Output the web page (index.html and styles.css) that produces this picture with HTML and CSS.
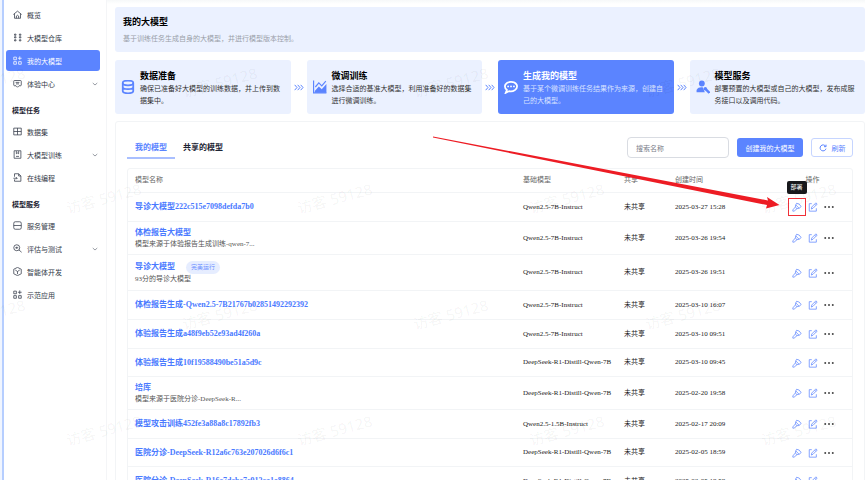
FILE: index.html
```html
<!DOCTYPE html>
<html lang="zh-CN">
<head>
<meta charset="utf-8">
<meta name="viewport" content="width=device-width, initial-scale=1">
<title>我的大模型</title>
<link rel="stylesheet" href="styles.css">
</head>
<body>
<svg class="sprite" aria-hidden="true">
  <symbol id="deploy" viewBox="0 0 24 24"><path d="M11 3q7 0 11 8l-5 4-8-8ZM9 7l-1 5 4 4 5-1M8 12l-6 7v3h3l7-6"/></symbol>
  <symbol id="edit" viewBox="0 0 24 24"><path d="M9 4H3v18h17v-7M8 17l1-5L19 2l3 3-10 10-4 2ZM16 5l3 3"/></symbol>
  <symbol id="more" viewBox="0 0 24 24"><path d="M1 12h4M10 12h4M19 12h4"/></symbol>
  <symbol id="chevron" viewBox="0 0 24 24"><path d="m3 8 9 8 9-8"/></symbol>
  <symbol id="arrows" viewBox="0 0 30 20"><path d="m2 2 7 8-7 8M11 2l7 8-7 8M20 2l7 8-7 8"/></symbol>
</svg>
<div class="app">
  <nav class="sidebar">
    <a class="item" href="#"><svg class="icon" viewBox="0 0 24 24"><path d="m1 12 11-9 11 9M4 10v12h16V10M9 22v-6q3-4 6 0v6"/></svg>概览</a>
    <a class="item" href="#"><svg class="icon" viewBox="0 0 24 24"><path d="M4 3h4v3H4ZM4 10h4v3H4ZM4 18h4v3H4ZM17 3h4v3h-4ZM17 10h4v3h-4ZM17 18h4v3h-4Z"/></svg>大模型仓库</a>
    <a class="item active" href="#"><svg class="icon" viewBox="0 0 24 24"><path d="M2 3h7v7H2ZM2 15h7v7H2ZM15 15h7v7h-7ZM18 1v10M13 6h10"/></svg>我的大模型</a>
    <a class="item" href="#"><svg class="icon" viewBox="0 0 24 24"><path d="M4 4h16q2 0 2 2v10q0 2-2 2h-4l-4 4-4-4H4q-2 0-2-2V6q0-2 2-2ZM7 9h10M8 13h8"/></svg>体验中心<svg class="chevron"><use href="#chevron"/></svg></a>
    <h2>模型任务</h2>
    <a class="item" href="#"><svg class="icon" viewBox="0 0 24 24"><path d="M2 3h20v18H2ZM12 3v18M2 12h20"/></svg>数据集</a>
    <a class="item" href="#"><svg class="icon" viewBox="0 0 24 24"><path d="M3 2h18v20H3ZM9 3v7l3-2 3 2V3M8 17h8"/></svg>大模型训练<svg class="chevron"><use href="#chevron"/></svg></a>
    <a class="item" href="#"><svg class="icon" viewBox="0 0 24 24"><path d="M4 10V2h11l6 6v14H4v-5M15 2v6h6M1 14h10M8 11l3 3-3 3"/></svg>在线编程</a>
    <h2>模型服务</h2>
    <a class="item" href="#"><svg class="icon" viewBox="0 0 24 24"><rect x="2" y="2" width="20" height="20" rx="4"/><path d="M2 12h20"/></svg>服务管理</a>
    <a class="item" href="#"><svg class="icon" viewBox="0 0 24 24"><circle cx="10" cy="10" r="8"/><path d="m16 16 7 6M6 10h8M10 7v6"/></svg>评估与测试<svg class="chevron"><use href="#chevron"/></svg></a>
    <a class="item" href="#"><svg class="icon" viewBox="0 0 24 24"><path d="m12 1 10 5v12l-10 5-10-5V6ZM6 8l6 4 6-4M12 12v7"/></svg>智能体开发</a>
    <a class="item" href="#"><svg class="icon" viewBox="0 0 24 24"><path d="M2 3h7v7H2ZM2 15h7v7H2ZM15 15h7v7h-7ZM18 1v10M13 6h10"/></svg>示范应用</a>
  </nav>
  <main>
    <header class="banner">
      <h1>我的大模型</h1>
      <p>基于训练任务生成自身的大模型，并进行模型版本控制。</p>
    </header>
    <section class="steps">
      <article class="step">
        <svg viewBox="0 0 24 24"><ellipse cx="12" cy="5" rx="9" ry="4"/><path d="M3 5v14c0 5 18 5 18 0V5M3 12c0 5 18 5 18 0"/></svg>
        <div><h3>数据准备</h3><p>确保已准备好大模型的训练数据，并上传到数据集中。</p></div>
      </article>
      <svg class="next"><use href="#arrows"/></svg>
      <article class="step">
        <svg viewBox="0 0 24 24"><path class="thin" d="M1 1v21h22M4 12l6-7 5 5 7-8"/><path class="solid" d="m3 19 7-8 5 5 8-9v15H3Z"/></svg>
        <div><h3>微调训练</h3><p>选择合适的基准大模型，利用准备好的数据集进行微调训练。</p></div>
      </article>
      <svg class="next"><use href="#arrows"/></svg>
      <article class="step current">
        <svg viewBox="0 0 24 24"><path d="M5 17C-2 11 3 3 12 3s14 8 7 14c-3 2-7 3-10 2l-6 3Z"/><path class="dots" d="M7 11h.1M12 11h.1M17 11h.1"/></svg>
        <div><h3>生成我的模型</h3><p>基于某个微调训练任务结果作为来源，创建自己的大模型。</p></div>
      </article>
      <svg class="next"><use href="#arrows"/></svg>
      <article class="step">
        <svg viewBox="0 0 24 24"><g class="solid"><circle cx="10" cy="6" r="5"/><path d="M1 21v-4c2-4 7-5 11-4l3 8Z"/></g><path class="wrench" d="m17 16 6 6"/><circle class="solid" cx="16" cy="15" r="3"/></svg>
        <div><h3>模型服务</h3><p>部署预置的大模型或自己的大模型，发布成服务接口以及调用代码。</p></div>
      </article>
    </section>
    <section class="panel">
      <div class="toolbar">
        <div class="tabs" role="tablist">
          <button class="tab selected" role="tab" aria-selected="true">我的模型</button>
          <button class="tab" role="tab" aria-selected="false">共享的模型</button>
        </div>
        <input class="search" type="text" placeholder="搜索名称" aria-label="搜索名称">
        <button class="create">创建我的大模型</button>
        <button class="refresh"><svg viewBox="0 0 24 24"><path d="M20 7a9 9 0 1 0 1 7M21 2v6h-6"/></svg>刷新</button>
      </div>
      <div class="frame">
      <table>
        <colgroup><col><col class="c-base"><col class="c-share"><col class="c-time"><col class="c-ops"></colgroup>
        <thead><tr><th>模型名称</th><th>基础模型</th><th>共享</th><th>创建时间</th><th class="ops">操作</th></tr></thead>
        <tbody>
          <tr><td><a href="#">导诊大模型222c515e7098defda7b0</a></td><td>Qwen2.5-7B-Instruct</td><td>未共享</td><td>2025-03-27 15:28</td><td class="ops"><div><button class="marked" aria-label="部署"><svg><use href="#deploy"/></svg><span class="tip">部署</span></button><button aria-label="编辑"><svg><use href="#edit"/></svg></button><button class="more" aria-label="更多"><svg><use href="#more"/></svg></button></div></td></tr>
          <tr class="double"><td><a href="#">体检报告大模型</a><p>模型来源于体验报告生成训练-qwen-7...</p></td><td>Qwen2.5-7B-Instruct</td><td>未共享</td><td>2025-03-26 19:54</td><td class="ops"><div><button aria-label="部署"><svg><use href="#deploy"/></svg></button><button aria-label="编辑"><svg><use href="#edit"/></svg></button><button class="more" aria-label="更多"><svg><use href="#more"/></svg></button></div></td></tr>
          <tr class="tagged"><td><a href="#">导诊大模型</a><span class="tag">完美运行</span><p>93分的导诊大模型</p></td><td>Qwen2.5-7B-Instruct</td><td>未共享</td><td>2025-03-26 19:51</td><td class="ops"><div><button aria-label="部署"><svg><use href="#deploy"/></svg></button><button aria-label="编辑"><svg><use href="#edit"/></svg></button><button class="more" aria-label="更多"><svg><use href="#more"/></svg></button></div></td></tr>
          <tr><td><a href="#">体检报告生成-Qwen2.5-7B21767b02851492292392</a></td><td>Qwen2.5-7B-Instruct</td><td>未共享</td><td>2025-03-10 16:07</td><td class="ops"><div><button aria-label="部署"><svg><use href="#deploy"/></svg></button><button aria-label="编辑"><svg><use href="#edit"/></svg></button><button class="more" aria-label="更多"><svg><use href="#more"/></svg></button></div></td></tr>
          <tr><td><a href="#">体验报告生成a48f9eb52e93ad4f260a</a></td><td>Qwen2.5-7B-Instruct</td><td>未共享</td><td>2025-03-10 09:51</td><td class="ops"><div><button aria-label="部署"><svg><use href="#deploy"/></svg></button><button aria-label="编辑"><svg><use href="#edit"/></svg></button><button class="more" aria-label="更多"><svg><use href="#more"/></svg></button></div></td></tr>
          <tr><td><a href="#">体验报告生成10f19588490be51a5d9c</a></td><td>DeepSeek-R1-Distill-Qwen-7B</td><td>未共享</td><td>2025-03-10 09:45</td><td class="ops"><div><button aria-label="部署"><svg><use href="#deploy"/></svg></button><button aria-label="编辑"><svg><use href="#edit"/></svg></button><button class="more" aria-label="更多"><svg><use href="#more"/></svg></button></div></td></tr>
          <tr class="double"><td><a href="#">培库</a><p>模型来源于医院分诊-DeepSeek-R...</p></td><td>DeepSeek-R1-Distill-Qwen-7B</td><td>未共享</td><td>2025-02-20 19:58</td><td class="ops"><div><button aria-label="部署"><svg><use href="#deploy"/></svg></button><button aria-label="编辑"><svg><use href="#edit"/></svg></button><button class="more" aria-label="更多"><svg><use href="#more"/></svg></button></div></td></tr>
          <tr><td><a href="#">模型攻击训练452fe3a88a8c17892fb3</a></td><td>Qwen2.5-1.5B-Instruct</td><td>未共享</td><td>2025-02-17 20:09</td><td class="ops"><div><button aria-label="部署"><svg><use href="#deploy"/></svg></button><button aria-label="编辑"><svg><use href="#edit"/></svg></button><button class="more" aria-label="更多"><svg><use href="#more"/></svg></button></div></td></tr>
          <tr><td><a href="#">医院分诊-DeepSeek-R12a6c763e207026d6f6c1</a></td><td>DeepSeek-R1-Distill-Qwen-7B</td><td>未共享</td><td>2025-02-05 18:59</td><td class="ops"><div><button aria-label="部署"><svg><use href="#deploy"/></svg></button><button aria-label="编辑"><svg><use href="#edit"/></svg></button><button class="more" aria-label="更多"><svg><use href="#more"/></svg></button></div></td></tr>
          <tr><td><a href="#">医院分诊-DeepSeek-R16c7dcbc7c913ca1e8864</a></td><td>DeepSeek-R1-Distill-Qwen-7B</td><td>未共享</td><td>2025-02-05 18:58</td><td class="ops"><div><button aria-label="部署"><svg><use href="#deploy"/></svg></button><button aria-label="编辑"><svg><use href="#edit"/></svg></button><button class="more" aria-label="更多"><svg><use href="#more"/></svg></button></div></td></tr>
        </tbody>
      </table>
      </div>
    </section>
  </main>
</div>
<svg class="overlay" aria-hidden="true">
  <g class="watermark">
    <text transform="translate(-48 330) rotate(-15)">访客 59128</text>
    <text transform="translate(184 98) rotate(-15)">访客 59128</text>
    <text transform="translate(415 98) rotate(-15)">访客 59128</text>
    <text transform="translate(647 98) rotate(-15)">访客 59128</text>
    <text transform="translate(-48 98) rotate(-15)">访客 59128</text>
    <text transform="translate(68 214) rotate(-15)">访客 59128</text>
    <text transform="translate(299 214) rotate(-15)">访客 59128</text>
    <text transform="translate(531 214) rotate(-15)">访客 59128</text>
    <text transform="translate(763 214) rotate(-15)">访客 59128</text>
    <text transform="translate(184 330) rotate(-15)">访客 59128</text>
    <text transform="translate(415 330) rotate(-15)">访客 59128</text>
    <text transform="translate(647 330) rotate(-15)">访客 59128</text>
    <text transform="translate(68 446) rotate(-15)">访客 59128</text>
    <text transform="translate(299 446) rotate(-15)">访客 59128</text>
    <text transform="translate(531 446) rotate(-15)">访客 59128</text>
    <text transform="translate(763 446) rotate(-15)">访客 59128</text>
  </g>
  <path class="pointer" d="M433 136.5 768 200.5 767 197 779.500 205 766 208.500 767 205 433 137.500Z"/>
</svg>
</body>
</html>
```

FILE: styles.css
```css
:root {
  --blue: #5b84ff;
  --pale: #ebf1ff;
  --line: #f2f4f6;
  --sans: "Noto Sans CJK SC", sans-serif;
}
* { box-sizing: border-box; }
body {
  margin: 0;
  background: #fff;
  color: #333;
  font: 7px/12px var(--sans);
}
h1, h2, h3, p { margin: 0; }
a { color: inherit; text-decoration: none; }
button, input { font: inherit; }
button { padding: 0; border: 0; background: none; color: inherit; }
svg { fill: none; stroke: currentColor; stroke-width: 2; flex: none; }
.sprite { position: absolute; width: 0; height: 0; }
.solid { fill: currentColor; stroke: none; }

.app {
  display: flex;
  height: 100vh;
  overflow: hidden;
  border-left: 2px solid #f0f5ff;
}
.sidebar {
  flex: none;
  width: 105px;
  padding: 4px 6px 0 2px;
  display: flex;
  flex-direction: column;
  gap: 2px;
  border-left: 2px solid #b6ceff;
  border-right: 1px solid #f4f5f7;
}
.item {
  display: flex;
  align-items: center;
  gap: 5px;
  height: 21px;
  padding: 0 1px 0 7px;
  border-radius: 3px;
  color: #333a48;
}
.item.active { background: var(--blue); color: #fff; }
.icon { width: 9px; height: 9px; }
.chevron { width: 6px; height: 6px; margin-left: auto; margin-right: 1px; }
.sidebar h2 {
  height: 23px;
  padding: 6px 0 0 6px;
  color: #1d2433;
  font-size: 7px;
  line-height: 17px;
}

main {
  flex: 1;
  min-width: 0;
  padding: 7px 0 0 8px;
  background: linear-gradient(#f6f8f9, #fff 4px);
}
.banner {
  height: 45px;
  padding: 7px 8px;
  border-radius: 3px;
  background: var(--pale);
}
.banner h1 { color: #000; font-size: 9px; line-height: 15px; }
.banner p { margin-top: 3px; color: #9a9fa9; }

.steps {
  display: grid;
  grid-template-columns: 1fr 16px 1fr 16px 1fr 16px 1fr;
  align-items: center;
  margin-top: 8px;
}
.step {
  display: flex;
  align-items: center;
  gap: 5px;
  height: 54px;
  padding: 0 4px 0 6px;
  border-radius: 3px;
  background: var(--pale);
}
.step > svg { width: 14px; height: 14px; color: var(--blue); stroke-width: 3; }
.step h3 { color: #000; font-size: 9px; line-height: 13px; }
.step .thin { stroke-width: 2; }
.step .dots { stroke-width: 3; stroke-linecap: round; }
.step .wrench { stroke-width: 4; }
.step.current { background: var(--blue); color: #d8e2ff; }
.step.current h3, .step.current > svg { color: #fff; }
.next { width: 10px; height: 7px; margin: auto; color: var(--blue); stroke-width: 3; }

.panel {
  margin-top: 7px;
  padding: 14px 11px 0;
  border: 1px solid var(--line);
  border-radius: 3px;
}
.toolbar { display: flex; align-items: center; gap: 8px; }
.tabs { display: flex; gap: 0; margin-right: auto; align-self: stretch; }
.tab {
  height: 23px;
  padding: 0 8px;
  border-bottom: 2px solid transparent;
  color: #1d2433;
  font-size: 8px;
  font-weight: 700;
}
.tab.selected { border-color: #a9bfff; color: var(--blue); }
.search {
  width: 102px;
  height: 21px;
  padding: 0 8px;
  border: 1px solid #d9dce2;
  border-radius: 4px;
  background: #fff;
}
.search::placeholder { color: #7b808a; }
.create {
  width: 66px;
  height: 19px;
  border-radius: 3px;
  background: var(--blue);
  color: #fff;
}
.refresh {
  display: flex;
  align-items: center;
  justify-content: center;
  gap: 5px;
  width: 42px;
  height: 19px;
  border: 1px solid #c6d5ff;
  border-radius: 3px;
  color: var(--blue);
}
.refresh svg { width: 8px; height: 8px; stroke-width: 3; }

.frame {
  margin-top: 9px;
  border: 1px solid var(--line);
  border-radius: 3px;
}
table {
  width: 100%;
  table-layout: fixed;
  border-spacing: 0;
  font: 7px/11px "Liberation Serif", var(--sans);
}
.c-base { width: 101px; }
.c-share { width: 51px; }
.c-time { width: 121px; }
.c-ops { width: 64px; }
th, td {
  padding: 0 0 0 8px;
  border-bottom: 1px solid var(--line);
  text-align: left;
  white-space: nowrap;
}
th:first-child, td:first-child { padding-left: 7px; }
th { height: 24px; color: #666; font-weight: 400; }
td { height: 29px; color: #222; }
tr:nth-child(3n) td { height: 28px; }
.double td { height: 33px; }
tr.tagged td { height: 36px; }
td a { color: #4a7aff; font-size: 8px; font-weight: 700; }
td p { color: #555; }
.tag {
  display: inline-block;
  margin-left: 11px;
  padding: 0 5px;
  border-radius: 7px;
  background: #e6edff;
  color: #6c90ff;
  font-size: 6px;
  line-height: 13px;
}
th.ops, td.ops { padding: 0 15px 0 0; text-align: center; }
.ops div { display: flex; justify-content: center; gap: 6px; }
.ops button {
  position: relative;
  display: grid;
  width: 10px;
  height: 10px;
  place-items: center;
  color: #6f93ff;
}
.ops svg { width: 10px; height: 10px; }
.ops .more { color: #222; }
.ops .more svg { stroke-width: 4; }
.marked::before {
  content: "";
  position: absolute;
  inset: -4px;
  border: 1px solid #f03038;
}
.tip {
  position: absolute;
  left: -5px;
  bottom: 18px;
  width: 20px;
  border-radius: 2px;
  background: #17181b;
  color: #fff;
  font-size: 6px;
  line-height: 13px;
}
.overlay {
  position: absolute;
  inset: 0;
  width: 100%;
  height: 100%;
  pointer-events: none;
  stroke: none;
}
.watermark { fill: #000; fill-opacity: 0.05; font: 15px "Noto Sans", var(--sans); }
.pointer { fill: #ed1c24; }
```
